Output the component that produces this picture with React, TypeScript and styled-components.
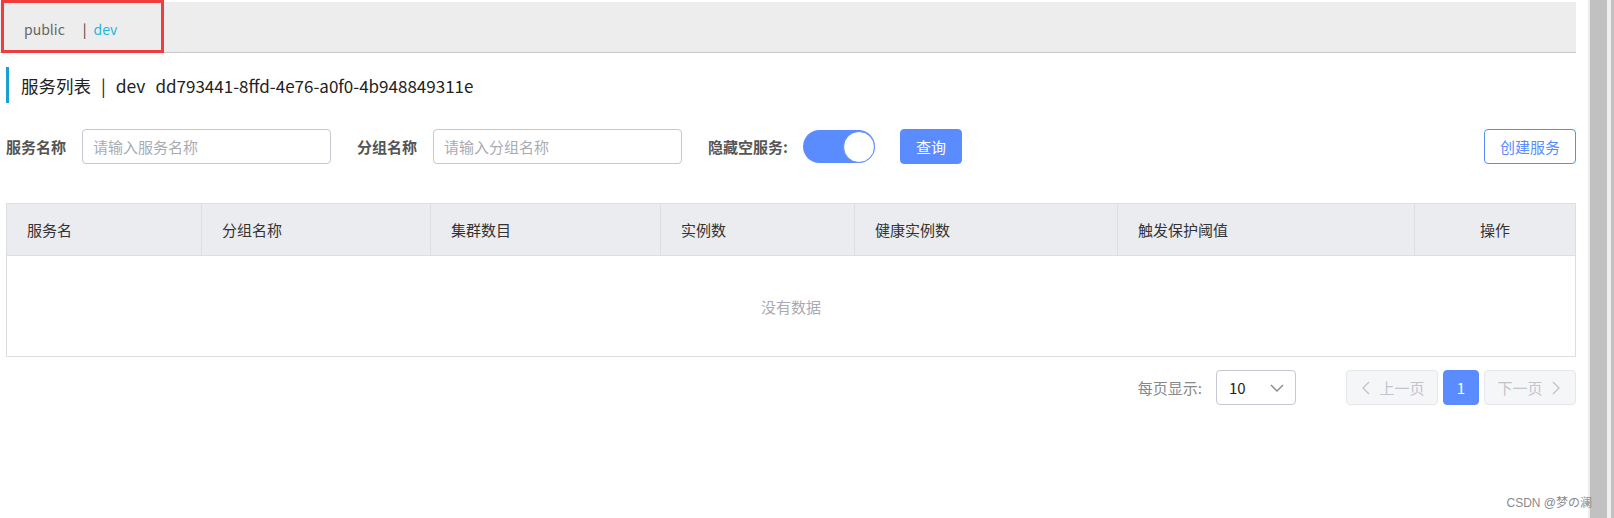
import React from 'react';
import styled, { createGlobalStyle } from 'styled-components';

const GlobalStyle = createGlobalStyle`
  html, body {
    margin: 0;
    padding: 0;
    background: #fff;
  }
  body {
    font-family: "Noto Sans CJK SC", "Noto Sans", "Liberation Sans", sans-serif;
    color: #333;
  }
  * {
    box-sizing: border-box;
  }
`;

const blue = '#5a8cff';

const Page = styled.div`
  position: relative;
  display: flex;
  width: 1614px;
  height: 518px;
  overflow: hidden;
  background: #fff;
`;

const Main = styled.div`
  flex: 1;
  padding-right: 12px;
  display: flex;
  flex-direction: column;
`;

const Scrollbar = styled.div`
  width: 26px;
  display: flex;
  flex-shrink: 0;
`;

const ScrollPart = styled.div<{ $w: number; $c: string }>`
  width: ${(p) => p.$w}px;
  background: ${(p) => p.$c};
`;

const TopBar = styled.div`
  margin-top: 2px;
  height: 51px;
  background: #ededed;
  border-bottom: 1px solid #c9c9c9;
  display: flex;
  align-items: center;
  padding: 4px 0 0 24px;
  font-size: 14px;
`;

const NsItem = styled.span<{ $active?: boolean }>`
  color: ${(p) => (p.$active ? '#1fb6dc' : '#666')};
`;

const NsSep = styled.span`
  color: #333;
  margin: 0 7px 0 18px;
`;

const Highlight = styled.div`
  position: absolute;
  left: 1px;
  top: 0;
  width: 163px;
  height: 53px;
  border: 3px solid #f03c3c;
  pointer-events: none;
`;

const Title = styled.div`
  margin: 14px 0 0 6px;
  height: 36px;
  border-left: 3px solid #1ba0d4;
  padding-left: 12px;
  display: flex;
  align-items: center;
  gap: 10px;
  font-size: 17.5px;
  color: #222;
  white-space: nowrap;
`;

const TitleId = styled.span`
  font-size: 17px;
`;

const SearchRow = styled.div`
  margin-top: 26px;
  padding-left: 6px;
  height: 35px;
  display: flex;
  align-items: center;
`;

const Label = styled.span<{ $gap?: number }>`
  font-size: 15px;
  font-weight: 700;
  color: #555;
  margin-right: ${(p) => p.$gap ?? 16}px;
  white-space: nowrap;
`;

const Input = styled.input`
  width: 249px;
  height: 35px;
  border: 1px solid #c5c8d2;
  border-radius: 4px;
  padding: 0 10px;
  font-size: 15px;
  font-family: inherit;
  margin-right: 26px;
  outline: none;
  &::placeholder {
    color: #a9abb3;
  }
`;

const Toggle = styled.div`
  width: 72px;
  height: 33px;
  border-radius: 17px;
  background: ${blue};
  display: flex;
  justify-content: flex-end;
  align-items: center;
  margin-right: 25px;
`;

const Knob = styled.div`
  width: 32px;
  height: 32px;
  border-radius: 50%;
  background: #fff;
  border: 1px solid ${blue};
`;

const Button = styled.button<{ $variant?: 'primary' | 'outline'; $w: number }>`
  width: ${(p) => p.$w}px;
  height: 35px;
  padding: 0;
  border-radius: 4px;
  font-size: 15px;
  font-family: inherit;
  cursor: pointer;
  border: 1px solid ${blue};
  background: ${(p) => (p.$variant === 'outline' ? '#fff' : blue)};
  color: ${(p) => (p.$variant === 'outline' ? blue : '#fff')};
`;

const Spacer = styled.div`
  flex: 1;
`;

const Table = styled.div`
  margin: 39px 0 0 6px;
  border: 1px solid #dcdee3;
`;

const HeadRow = styled.div`
  display: grid;
  grid-template-columns: 194px 229px 230px 194px 263px 297px 1fr;
  height: 52px;
  background: #ebecf0;
  border-bottom: 1px solid #dcdee3;
`;

const HeadCell = styled.div<{ $center?: boolean }>`
  display: flex;
  align-items: center;
  justify-content: ${(p) => (p.$center ? 'center' : 'flex-start')};
  padding-left: ${(p) => (p.$center ? 0 : 20)}px;
  font-size: 15px;
  color: #333;
  border-left: 1px solid #dcdee3;
  &:first-child {
    border-left: none;
  }
`;

const Empty = styled.div`
  height: 100px;
  display: flex;
  align-items: center;
  justify-content: center;
  font-size: 15px;
  color: #a8abb3;
`;

const Pager = styled.div`
  margin-top: 13px;
  display: flex;
  justify-content: flex-end;
  align-items: center;
  gap: 5px;
`;

const PagerLabel = styled.span`
  font-size: 15px;
  color: #888;
  margin-right: 9px;
`;

const Select = styled.div`
  width: 80px;
  height: 35px;
  border: 1px solid #c5c8d2;
  border-radius: 4px;
  display: flex;
  align-items: center;
  justify-content: space-between;
  padding: 0 10px 0 12px;
  font-size: 15px;
  color: #222;
  margin-right: 45px;
`;

const PageBtn = styled.div<{ $active?: boolean; $w: number }>`
  width: ${(p) => p.$w}px;
  height: 35px;
  border-radius: 4px;
  display: flex;
  align-items: center;
  justify-content: center;
  gap: 4px;
  font-size: 15px;
  border: 1px solid ${(p) => (p.$active ? blue : '#e4e6ea')};
  background: ${(p) => (p.$active ? blue : '#f5f6f8')};
  color: ${(p) => (p.$active ? '#fff' : '#c2c4cb')};
`;

const Watermark = styled.div`
  position: absolute;
  right: 22px;
  bottom: 8px;
  font-size: 12px;
  color: #8a8a8a;
  font-family: "Liberation Sans", "Noto Sans CJK SC", sans-serif;
`;

const Chevron: React.FC<{ dir: 'left' | 'right' | 'down'; size?: number; color: string }> = ({ dir, size = 14, color }) => {
  const d =
    dir === 'left' ? 'M10 2 L4 8 L10 14' : dir === 'right' ? 'M6 2 L12 8 L6 14' : 'M2 5 L8 11 L14 5';
  return (
    <svg width={size} height={size} viewBox="0 0 16 16" fill="none">
      <path d={d} stroke={color} strokeWidth="1.4" />
    </svg>
  );
};

const columns = ['服务名', '分组名称', '集群数目', '实例数', '健康实例数', '触发保护阈值', '操作'];

const App: React.FC = () => {
  return (
    <Page>
      <GlobalStyle />
      <Main>
        <TopBar>
          <NsItem>public</NsItem>
          <NsSep>|</NsSep>
          <NsItem $active>dev</NsItem>
        </TopBar>

        <Title>
          <span>服务列表</span>
          <span>|</span>
          <span>dev</span>
          <TitleId>dd793441-8ffd-4e76-a0f0-4b948849311e</TitleId>
        </Title>

        <SearchRow>
          <Label>服务名称</Label>
          <Input placeholder="请输入服务名称" />
          <Label>分组名称</Label>
          <Input placeholder="请输入分组名称" />
          <Label $gap={15}>隐藏空服务:</Label>
          <Toggle>
            <Knob />
          </Toggle>
          <Button $w={62}>查询</Button>
          <Spacer />
          <Button $variant="outline" $w={92}>
            创建服务
          </Button>
        </SearchRow>

        <Table>
          <HeadRow>
            {columns.map((c, i) => (
              <HeadCell key={c} $center={i === columns.length - 1}>
                {c}
              </HeadCell>
            ))}
          </HeadRow>
          <Empty>没有数据</Empty>
        </Table>

        <Pager>
          <PagerLabel>每页显示:</PagerLabel>
          <Select>
            <span>10</span>
            <Chevron dir="down" size={16} color="#888" />
          </Select>
          <PageBtn $w={92}>
            <Chevron dir="left" size={16} color="#c2c4cb" />
            上一页
          </PageBtn>
          <PageBtn $w={36} $active>
            1
          </PageBtn>
          <PageBtn $w={92}>
            下一页
            <Chevron dir="right" size={16} color="#c2c4cb" />
          </PageBtn>
        </Pager>
      </Main>

      <Scrollbar>
        <ScrollPart $w={2} $c="#ececec" />
        <ScrollPart $w={17} $c="#c1c1c1" />
        <ScrollPart $w={4} $c="#f0f0f0" />
        <ScrollPart $w={3} $c="#c1c1c1" />
      </Scrollbar>

      <Highlight />
      <Watermark>CSDN @梦の澜</Watermark>
    </Page>
  );
};

export default App;
